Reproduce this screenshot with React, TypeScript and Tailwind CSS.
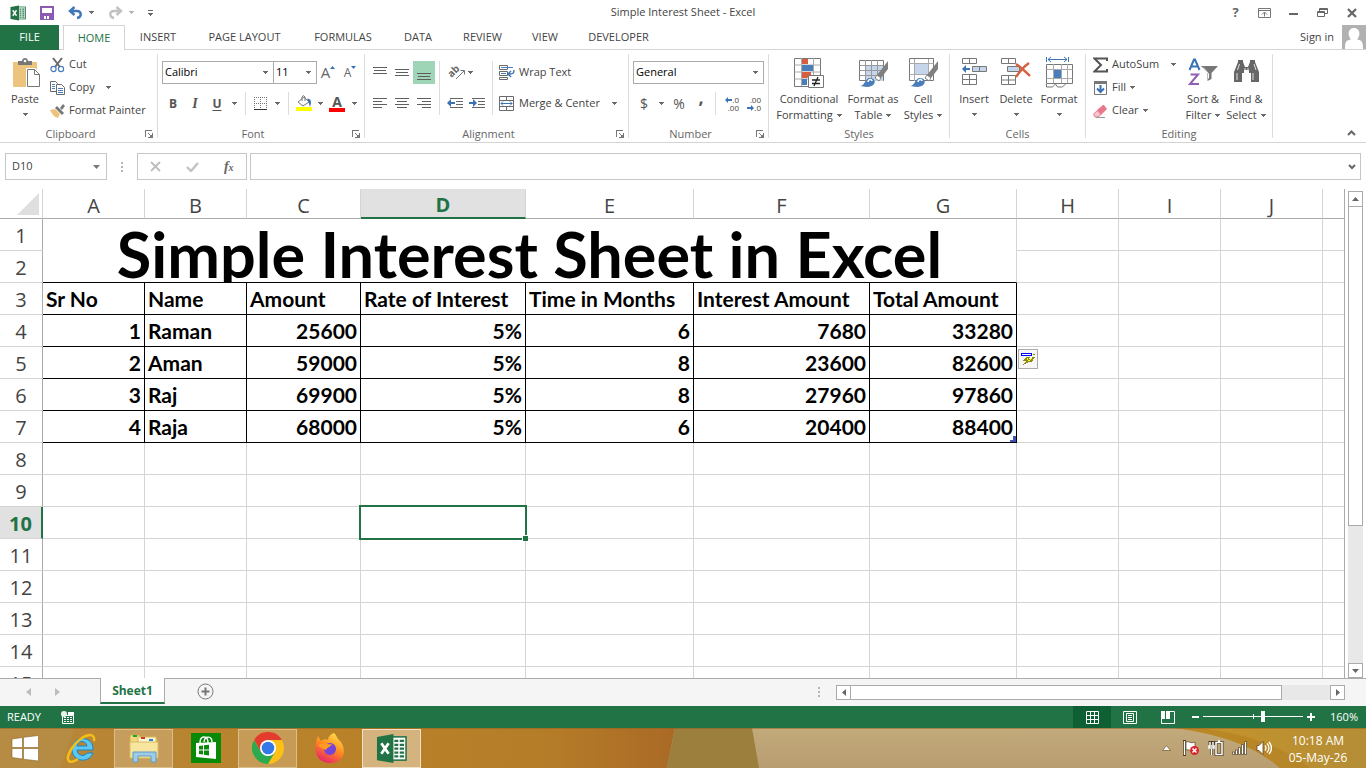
import React from "react";

type Kids = { children?: React.ReactNode };

const columns = ["A", "B", "C", "D", "E", "F", "G", "H", "I", "J", ""];
const headings = ["Sr No", "Name", "Amount", "Rate of Interest", "Time in Months", "Interest Amount", "Total Amount"];
const records = [
  ["1", "Raman", "25600", "5%", "6", "7680", "33280"],
  ["2", "Aman", "59000", "5%", "8", "23600", "82600"],
  ["3", "Raj", "69900", "5%", "8", "27960", "97860"],
  ["4", "Raja", "68000", "5%", "6", "20400", "88400"],
];
const emptyRows = [8, 9, 10, 11, 12, 13, 14, 15];

/* ---------- small drawings ---------- */

function Caret({ className = "" }: { className?: string }) {
  return (
    <svg width="5" height="3" viewBox="0 0 5 3" className={"shrink-0 " + className} shapeRendering="crispEdges" aria-hidden="true">
      <path d="M0 0h5v1H0zM1 1h3v1H1zM2 2h1v1H2z" fill="#6a6a6a" />
    </svg>
  );
}

function ExcelMark({ size }: { size: number }) {
  return (
    <svg width={size} height={size} viewBox="0 0 32 32" aria-hidden="true">
      <rect x="16" y="4" width="15" height="24" fill="#fff" stroke="#217346" strokeWidth="1.6" />
      <g fill="#217346">
        <path d="M19 7h4v2.4h-4zM24.500 7H29v2.400h-4.500zM19 11h4v2.400h-4zM24.500 11H29v2.400h-4.500zM19 15h4v2.400h-4zM24.500 15H29v2.400h-4.500zM19 19h4v2.400h-4zM24.500 19H29v2.400h-4.500zM19 23h4v2.400h-4zM24.500 23H29v2.400h-4.500z" />
      </g>
      <path d="M1 4 18 1v30L1 28z" fill="#217346" />
      <path d="m5.500 10.500 7.500 11M13 10.500l-7.500 11" stroke="#fff" strokeWidth="2.800" />
    </svg>
  );
}

function Lines({ rows }: { rows: [number, number, number][] }) {
  return (
    <svg width="14" height="14" viewBox="0 0 14 14" shapeRendering="crispEdges" aria-hidden="true">
      {rows.map(([l, y, w]) => (
        <rect key={y} x={l} y={y} width={w} height="1" fill="#5f5f5f" />
      ))}
    </svg>
  );
}

function Launcher() {
  return (
    <svg width="8" height="8" viewBox="0 0 8 8" fill="none" shapeRendering="crispEdges" aria-hidden="true">
      <path d="M0 0h7v1H1v6H0z" fill="#777" />
      <path d="M7 3h1v5H3V7h4zM3 3h1v1H3zM4 4h1v1H4zM5 5h2v2H5z" fill="#777" />
    </svg>
  );
}

function Brush() {
  return (
    <g>
      <path d="M31 5v8l-7 9-4-3z" fill="#808080" />
      <path d="M20 19l4 3-2 3-4-3z" fill="#fff" stroke="#808080" />
      <path d="M3 30c5 0 5-8 10-8 4 0 6 3 4 6-3 4-9 3-14 2z" fill="#4a7ebb" />
      <path d="M11 26c0-3 4-3 4-1" stroke="#fff" strokeWidth="1.500" fill="none" />
    </g>
  );
}

function Divider({ className = "" }: { className?: string }) {
  return <div className={"w-px shrink-0 bg-[#dcdcdc] " + className} />;
}

function Group({ label, width, launcher, children }: Kids & { label: string; width: string; launcher?: boolean }) {
  return (
    <>
      <section aria-label={label} className={"flex shrink-0 flex-col " + width}>
        <div className="flex h-[76px]">{children}</div>
        <div className="flex h-4 items-center">
          <span className="flex-1 text-center text-[#666]">{label}</span>
          {launcher && (
            <button type="button" aria-label={label + " settings"} className="flex w-4 items-center justify-center">
              <Launcher />
            </button>
          )}
        </div>
      </section>
      <Divider className="my-1" />
    </>
  );
}

function Tool({ label, width = "w-[22px]", className = "", children }: Kids & { label: string; width?: string; className?: string }) {
  return (
    <button type="button" aria-label={label} className={"flex h-[23px] shrink-0 items-center justify-center " + width + " " + className}>
      {children}
    </button>
  );
}

function BigTool({ icon, lines, width, caretBelow }: { icon: React.ReactNode; lines: string[]; width: string; caretBelow?: boolean }) {
  return (
    <button type="button" className={"flex shrink-0 flex-col items-center pt-1.5 " + width}>
      <span className="flex h-[35px] items-start justify-center">{icon}</span>
      <span className="leading-4 whitespace-nowrap">{lines[0]}</span>
      {caretBelow ? (
        <Caret className="mt-[6px]" />
      ) : (
        <span className="flex items-center gap-1 leading-4 whitespace-nowrap">
          {lines[1]}
          <Caret />
        </span>
      )}
    </button>
  );
}

function Picker({ label, value, width }: { label: string; value: string; width: string }) {
  return (
    <label className={"relative flex h-[23px] items-center border border-[#ababab] bg-white " + width}>
      <select aria-label={label} defaultValue={value} className="h-full w-full appearance-none bg-transparent pl-0.5 text-black outline-none">
        <option>{value}</option>
      </select>
      <Caret className="absolute right-[5px]" />
    </label>
  );
}

/* ---------- ribbon groups ---------- */

function Clipboard() {
  return (
    <Group label="Clipboard" width="w-[157px]" launcher>
      <BigTool
        width="w-[50px]"
        caretBelow
        lines={["Paste"]}
        icon={
          <svg width="30" height="33" viewBox="0 0 30 33" className="ml-1" aria-hidden="true">
            <path d="M1 6h24v25H1z" fill="#ecc47d" />
            <path d="M6 9V5h4c0-4 6-4 6 0h4v4z" fill="#777" />
            <circle cx="13" cy="5" r="1.300" fill="#fff" />
            <path d="M14 12h9l5 5v14H14z" fill="#fff" />
            <path d="M15.500 13.500h7l5 5v12h-12z" fill="#fff" stroke="#777" />
            <path d="M22.500 13.500v5h5" fill="none" stroke="#777" />
          </svg>
        }
      />
      <div className="flex flex-col pt-[3px]">
        <button type="button" className="flex h-[23px] items-center gap-1">
          <svg width="15" height="16" viewBox="0 0 15 16" fill="none" aria-hidden="true">
            <path d="M3 1l7 9M12 1l-7 9" stroke="#6a6a6a" strokeWidth="2" />
            <circle cx="3.500" cy="12" r="2.600" stroke="#4a7ebb" strokeWidth="1.200" />
            <circle cx="11" cy="12" r="2.600" stroke="#4a7ebb" strokeWidth="1.200" />
          </svg>
          Cut
        </button>
        <button type="button" className="flex h-[23px] items-center gap-1">
          <svg width="15" height="14" viewBox="0 0 15 14" fill="#fff" stroke="#6a6a6a" aria-hidden="true">
            <path d="M.5.5h5l2 2v8h-7z" />
            <path d="M2 3.500h3M2 5.500h3M2 7.500h3" stroke="#4a7ebb" />
            <path d="M6.500 3.500h5l3 3v7h-8z" />
            <path d="M8 7.500h5M8 9.500h5M8 11.500h5" stroke="#4a7ebb" />
          </svg>
          Copy
          <Caret className="ml-[7px]" />
        </button>
        <button type="button" className="flex h-[23px] items-center gap-1 whitespace-nowrap">
          <svg width="15" height="14" viewBox="0 0 15 14" aria-hidden="true">
            <path d="M0 6l5-1 5 5-2 4c-4-1-6-4-8-8z" fill="#ecc47d" />
            <path d="M5 4l2-2 7 7-2 2z" fill="#777" />
            <path d="M10 4l3-4 2 2-3 4z" fill="#777" />
          </svg>
          Format Painter
        </button>
      </div>
    </Group>
  );
}

function FontGroup() {
  return (
    <Group label="Font" width="w-[206px]" launcher>
      <div className="flex flex-col gap-2 pt-[11px] pl-1">
        <div className="flex">
          <Picker label="Font name" value="Calibri" width="w-28" />
          <Picker label="Font size" value="11" width="-ml-px w-11" />
          <Tool label="Increase font size">
            <span className="text-[15px] text-[#666]">A</span>
            <svg width="5" height="3" viewBox="0 0 5 3" className="mb-2.5" aria-hidden="true"><path d="M0 3 2.500 0 5 3z" fill="#3a72b4" /></svg>
          </Tool>
          <Tool label="Decrease font size">
            <span className="text-[12px] text-[#666]">A</span>
            <svg width="5" height="3" viewBox="0 0 5 3" className="mb-2.5" aria-hidden="true"><path d="M0 0h5L2.500 3z" fill="#3a72b4" /></svg>
          </Tool>
        </div>
        <div className="flex text-[12px] text-[#555]">
          <Tool label="Bold"><b>B</b></Tool>
          <Tool label="Italic"><i className="font-['Liberation_Serif',serif] text-[14px] font-bold">I</i></Tool>
          <Tool label="Underline"><b className="underline underline-offset-2">U</b></Tool>
          <Tool label="Underline styles" width="w-3"><Caret /></Tool>
          <Divider className="mx-[5px]" />
          <Tool label="Borders" width="w-5">
            <svg width="14" height="14" viewBox="0 0 14 14" fill="none" stroke="#777" aria-hidden="true">
              <path d="M0 .5h13M0 6.500h13M.5 0v12M6.500 0v12M12.500 0v12" strokeDasharray="1 1" />
              <path d="M0 12.500h13" stroke="#333" />
            </svg>
          </Tool>
          <Tool label="Border styles" width="w-3"><Caret /></Tool>
          <Divider className="mx-[5px]" />
          <Tool label="Fill colour" width="w-5">
            <svg width="17" height="17" viewBox="0 0 17 17" aria-hidden="true">
              <path d="M2 7l6-5 5 5-6 4z" fill="#fff" stroke="#777" />
              <path d="M6 6V2q1-3 3 0v4" fill="none" stroke="#777" />
              <path d="M11 4c4-1 5 3 3 8-1-3-1-5-3-8z" fill="#3a72b4" />
              <path d="M0 12h16v4H0z" fill="#ff0" />
            </svg>
          </Tool>
          <Tool label="Fill colours" width="w-3"><Caret /></Tool>
          <Tool label="Font colour" className="flex-col">
            <b className="text-[14px] leading-3">A</b>
            <span className="h-1 w-4 bg-[#f00]" />
          </Tool>
          <Tool label="Font colours" width="w-3"><Caret /></Tool>
        </div>
      </div>
    </Group>
  );
}

function Indent({ flip }: { flip?: boolean }) {
  return (
    <svg width="17" height="13" viewBox="0 0 17 13" aria-hidden="true">
      <path d="M3 1.500h13M9 4.500h7M9 7.500h7M3 10.500h13" stroke="#666" />
      <path d={flip ? "M8 6 4 2v3H0v2h4v3z" : "M0 6l4-4v3h4v2H4v3z"} fill="#3a72b4" />
    </svg>
  );
}

function Alignment() {
  return (
    <Group label="Alignment" width="w-[263px]" launcher>
      <div className="flex flex-col gap-2 pt-[11px] pl-1">
        <div className="flex">
          <Tool label="Top align"><Lines rows={[[0, 1, 14], [1, 4, 12], [0, 7, 14]]} /></Tool>
          <Tool label="Middle align"><Lines rows={[[0, 3, 14], [1, 6, 12], [0, 9, 14]]} /></Tool>
          <Tool label="Bottom align" className="bg-[#9fd5b7]"><Lines rows={[[0, 7, 14], [1, 10, 12], [0, 13, 14]]} /></Tool>
        </div>
        <div className="flex">
          <Tool label="Align left"><Lines rows={[[0, 1, 14], [0, 4, 9], [0, 7, 14], [0, 10, 9]]} /></Tool>
          <Tool label="Centre"><Lines rows={[[0, 1, 14], [2, 4, 10], [0, 7, 14], [2, 10, 10]]} /></Tool>
          <Tool label="Align right"><Lines rows={[[0, 1, 14], [5, 4, 9], [0, 7, 14], [5, 10, 9]]} /></Tool>
        </div>
      </div>
      <Divider className="mx-1 mt-[11px] mb-[11px]" />
      <div className="flex flex-col gap-2 pt-[11px]">
        <div className="flex">
          <Tool label="Orientation" className="relative">
            <span className="-rotate-45 pb-1.5 text-[10px] leading-3 font-bold text-[#666]">ab</span>
            <svg width="11" height="11" viewBox="0 0 11 11" className="absolute right-0 bottom-1" aria-hidden="true">
              <path d="M1 10 9 2M5.500 1.500h4v4" stroke="#777" fill="none" />
            </svg>
          </Tool>
          <Tool label="Orientation options" width="w-2"><Caret /></Tool>
        </div>
        <div className="flex">
          <Tool label="Decrease indent"><Indent /></Tool>
          <Tool label="Increase indent"><Indent flip /></Tool>
        </div>
      </div>
      <Divider className="mx-1 mt-[11px] mb-[11px]" />
      <div className="flex flex-col gap-2 pt-[11px] pl-0.5">
        <button type="button" className="flex h-[23px] items-center gap-1 whitespace-nowrap">
          <svg width="16" height="16" viewBox="0 0 16 16" fill="none" stroke="#6a6a6a" aria-hidden="true">
            <path d="M.5.5h8v4h-8zM.5 6.500h8v4h-8zM.5 12.500h8v2h-8z" />
            <path d="M2 2.500h12M2 8.500h5" stroke="#4a7ebb" />
            <path d="M15 5c0 4-2 4-5 4M12 6l-3 3 3 3" stroke="#3a72b4" strokeWidth="1.400" />
          </svg>
          Wrap Text
        </button>
        <button type="button" className="flex h-[23px] items-center gap-1 whitespace-nowrap">
          <svg width="16" height="16" viewBox="0 0 16 16" fill="none" stroke="#6a6a6a" aria-hidden="true">
            <path d="M.5.5h14v14H.5zM.5 4.500h14M.5 10.500h14M7.500.5v4M7.500 10.500v4" />
            <path d="M2 7.500h11M4 5.500l-2 2 2 2M11 5.500l2 2-2 2" stroke="#3a72b4" />
          </svg>
          Merge &amp; Center
          <Caret className="ml-2" />
        </button>
      </div>
    </Group>
  );
}

function DecimalIcon({ more }: { more?: boolean }) {
  const arrow = (
    <svg width="7" height="6" viewBox="0 0 7 6" aria-hidden="true">
      <path d={more ? "M0 3 3 0v2h4v2H3v2z" : "M7 3 4 0v2H0v2h4v2z"} fill="#3a72b4" />
    </svg>
  );
  return (
    <span className="flex w-4 flex-col items-end text-[8px] leading-2 text-[#444]">
      <span className="flex items-center">{more && arrow}{more ? ".0" : ".00"}</span>
      <span className="flex items-center">{!more && arrow}{more ? ".00" : ".0"}</span>
    </span>
  );
}

function NumberGroup() {
  return (
    <Group label="Number" width="w-[139px]" launcher>
      <div className="flex flex-col gap-2 pt-[11px] pl-1">
        <Picker label="Number format" value="General" width="w-[131px]" />
        <div className="flex text-[14px] text-[#555]">
          <Tool label="Currency">$</Tool>
          <Tool label="Currency options" width="w-3"><Caret /></Tool>
          <Tool label="Percent" width="w-6">%</Tool>
          <Tool label="Comma" width="w-5"><b className="-mt-3 text-[18px]">,</b></Tool>
          <Divider className="mx-1" />
          <Tool label="Increase decimal"><DecimalIcon more /></Tool>
          <Tool label="Decrease decimal"><DecimalIcon /></Tool>
        </div>
      </div>
    </Group>
  );
}

function Styles() {
  return (
    <Group label="Styles" width="w-[180px]">
      <BigTool
        width="ml-1 w-[72px]"
        lines={["Conditional", "Formatting"]}
        icon={
          <svg width="30" height="33" viewBox="0 0 30 33" aria-hidden="true">
            <path d="M.5 2.500h26v28H.5z" fill="#fff" stroke="#777" />
            <path d="M.5 9h26M.5 16h26M.5 23h26M7.500 2v28M19.500 2v28" stroke="#aaa" />
            <path d="M8 3h6v5H8zM8 16h9v4l-4 2H8z" fill="#d65f3f" />
            <path d="M8 9h11v6H8zM8 23h5v6H8z" fill="#4a7ebb" />
            <path d="M14.500 19.500h15v12h-15z" fill="#fff" stroke="#777" />
            <path d="M18 24h8M18 27.500h8M24 21l-4 9" stroke="#222" strokeWidth="1.300" />
          </svg>
        }
      />
      <BigTool
        width="w-14"
        lines={["Format as", "Table"]}
        icon={
          <svg width="32" height="33" viewBox="0 0 32 33" aria-hidden="true">
            <path d="M2.500 4.500h24v20h-24z" fill="#fff" stroke="#777" />
            <path d="M9 10h17v15H9z" fill="#c5d6ec" />
            <path d="M2.500 9.500h24M2.500 14.500h24M2.500 19.500h24M8.500 4v20M14.500 4v20M20.500 4v20" stroke="#999" fill="none" />
            <Brush />
          </svg>
        }
      />
      <BigTool
        width="w-11"
        lines={["Cell", "Styles"]}
        icon={
          <svg width="32" height="33" viewBox="0 0 32 33" aria-hidden="true">
            <path d="M2.500 2.500h24v22h-24z" fill="#fff" stroke="#777" />
            <path d="M2.500 7.500h24M2.500 18.500h24M7.500 3v22M21.500 3v22" stroke="#aaa" />
            <path d="M8 8h13v10H8z" fill="#c5d6ec" />
            <Brush />
          </svg>
        }
      />
    </Group>
  );
}

function Cells() {
  return (
    <Group label="Cells" width="w-[135px]">
      <BigTool
        width="ml-[3px] w-[42px]"
        caretBelow
        lines={["Insert"]}
        icon={
          <svg width="27" height="30" viewBox="0 0 27 30" fill="#fff" stroke="#777" aria-hidden="true">
            <path d="M1.500 2.500h14v5h-14zM8.500 2.500v5M1.500 18.500h14v10h-14zM8.500 18.500v10M1.500 23.500h14" />
            <path d="M11.500 10.500h14v5h-14zM18.500 10.500v5" fill="#c5d6ec" />
            <path d="M1 13l4-4v3h4v2H5v3z" fill="#3a72b4" stroke="none" />
          </svg>
        }
      />
      <BigTool
        width="w-[42px]"
        caretBelow
        lines={["Delete"]}
        icon={
          <svg width="30" height="30" viewBox="0 0 30 30" fill="#fff" stroke="#777" aria-hidden="true">
            <path d="M.5 2.500h14v5H.5zM7.500 2.500v5M.5 19.500h14v9H.5zM7.500 19.500v9M.5 24h14" />
            <path d="M6.500 10.500h12v5h-12z" fill="#c5d6ec" />
            <path d="M15 8q6 4 14 12M28 7q-7 5-13 14" stroke="#d65f3f" strokeWidth="2.400" fill="none" />
          </svg>
        }
      />
      <BigTool
        width="w-11"
        caretBelow
        lines={["Format"]}
        icon={
          <svg width="29" height="33" viewBox="0 0 29 33" fill="none" stroke="#777" aria-hidden="true">
            <path d="M1.500 1v5M23.500 1v5M3 3.500h19M6 1 3 3.500 6 6M19 1l3 2.500L19 6" stroke="#3a72b4" />
            <path d="M1.500 8.500h26v19h-26z" fill="#fff" />
            <path d="M1.500 13.500h26M1.500 22.500h26M8.500 8v19M16.500 8v19M22.500 8v19" stroke="#aaa" />
            <path d="M9 14h7v8H9z" fill="#4a7ebb" stroke="none" />
            <path d="M1.500 28v3h6l3-3 2 3h5l3-3" />
          </svg>
        }
      />
    </Group>
  );
}

function Editing() {
  return (
    <Group label="Editing" width="w-[186px]">
      <div className="flex w-[95px] flex-col pt-[3px] pl-[7px]">
        <button type="button" className="flex h-[23px] items-center gap-1">
          <svg width="15" height="16" viewBox="0 0 15 16" fill="none" aria-hidden="true">
            <path d="M14 4V1.500H1.500L8 8l-6.500 6.500H14V12" stroke="#555" strokeWidth="2" />
          </svg>
          AutoSum
          <Caret className="ml-2" />
        </button>
        <button type="button" className="flex h-[23px] items-center gap-1">
          <svg width="15" height="16" viewBox="0 0 15 16" aria-hidden="true">
            <path d="M1.500 1.500h12v13h-12z" fill="#fff" stroke="#777" />
            <path d="M1 1h13v3H1z" fill="#777" />
            <path d="M7.500 5v7M4 8.500l3.500 3.500L11 8.500" stroke="#3a72b4" strokeWidth="2" fill="none" />
          </svg>
          Fill
          <Caret />
        </button>
        <button type="button" className="flex h-[23px] items-center gap-1">
          <svg width="15" height="14" viewBox="0 0 15 14" aria-hidden="true">
            <path d="M4 6l6-5h1l3 4-6 6z" fill="#e8798d" />
            <path d="M4.500 6.500 8 10.500l-3 2.500H2L.5 10z" fill="#f7c4cd" stroke="#e8798d" />
            <path d="M3 13.500h9" stroke="#999" />
          </svg>
          Clear
          <Caret />
        </button>
      </div>
      <BigTool
        width="w-11"
        lines={["Sort &", "Filter"]}
        icon={
          <svg width="30" height="32" viewBox="0 0 30 32" aria-hidden="true">
            <path d="M1.500 14 6 3.500h1L11.500 14M3.500 10.500h6" stroke="#3a72b4" strokeWidth="2" fill="none" />
            <path d="M2.500 18.500H10l-8 9.500h9" stroke="#9160b5" strokeWidth="2" fill="none" />
            <path d="M13 10h17l-6.500 7v6l-4 2v-8z" fill="#777" />
            <path d="M15 11.500l5.500 6v5" stroke="#fff" fill="none" />
          </svg>
        }
      />
      <BigTool
        width="w-[42px]"
        lines={["Find &", "Select"]}
        icon={
          <svg width="27" height="32" viewBox="0 0 27 32" aria-hidden="true">
            <path d="M5 6V4h5v2l2 5h3l2-5V4h5v2l4 10v10h-8v-9h-2v-3h-5v3H9v9H1V16z" fill="#666" />
            <path d="M4 17v7M6.500 8l-2 6M12 12v3M21 8l2 6M20 17v7M15 12v3" stroke="#fff" strokeWidth="0.800" />
          </svg>
        }
      />
    </Group>
  );
}

/* ---------- window chrome ---------- */

const windowButton = "flex h-full w-[29px] items-center justify-center";

function TitleBar() {
  return (
    <header className="grid h-[25px] shrink-0 grid-cols-[1fr_auto_1fr] items-center">
      <div className="flex items-center pl-2.5">
        <ExcelMark size={16} />
        <button type="button" aria-label="Save" className="ml-3.5">
          <svg width="14" height="14" viewBox="0 0 14 14" aria-hidden="true">
            <path d="M1 1h12v12H1z" fill="#fff" stroke="#8a5bb0" strokeWidth="2" />
            <path d="M1 7h12v6H1z" fill="#8a5bb0" />
            <path d="M4 10h5v3H4z" fill="#fff" />
            <path d="M6 10h1v3H6z" fill="#8a5bb0" />
          </svg>
        </button>
        <button type="button" aria-label="Undo" className="ml-3.5 flex items-center gap-1.5">
          <svg width="15" height="14" viewBox="0 0 15 14" fill="none" stroke="#3f76b8" strokeWidth="2.400" aria-hidden="true">
            <path d="M6.500 1 2 5l4.500 4M2.500 5H9c5 0 5 6 0 7" />
          </svg>
          <Caret />
        </button>
        <button type="button" aria-label="Redo" className="ml-3.5 flex items-center gap-1.5 opacity-70">
          <svg width="15" height="14" viewBox="0 0 15 14" fill="none" stroke="#a9a9a9" strokeWidth="2.400" aria-hidden="true">
            <path d="M8.500 1 13 5 8.500 9M12.500 5H6c-5 0-5 6 0 7" />
          </svg>
          <Caret className="opacity-70" />
        </button>
        <button type="button" aria-label="Customize toolbar" className="ml-3.5 flex flex-col items-center gap-0.5">
          <span className="h-px w-[5px] bg-[#666]" />
          <Caret />
        </button>
      </div>
      <h1 className="text-[#444]">Simple Interest Sheet - Excel</h1>
      <div className="flex h-full items-center justify-end text-[#666]">
        <button type="button" aria-label="Help" className={windowButton + " text-[13px] font-bold"}>?</button>
        <button type="button" aria-label="Ribbon display options" className={windowButton}>
          <svg width="13" height="10" viewBox="0 0 13 10" fill="none" stroke="#777" aria-hidden="true">
            <path d="M.5.5h12v9H.5zM.5 2.500h12M6.500 8.500v-4M4 6.500l2.500-2.500L9 6.500" />
          </svg>
        </button>
        <button type="button" aria-label="Minimize" className={windowButton}>
          <svg width="13" height="10" viewBox="0 0 13 10" aria-hidden="true"><path d="M2 5h9v2H2z" fill="#666" /></svg>
        </button>
        <button type="button" aria-label="Restore" className={windowButton}>
          <svg width="11" height="10" viewBox="0 0 11 10" fill="none" stroke="#666" aria-hidden="true">
            <path d="M2.500 3V.5h8v5H8M.5 3.500h7v5h-7zM.5 4.500h7M2.500 1.500h8" />
          </svg>
        </button>
        <button type="button" aria-label="Close" className={windowButton}>
          <svg width="10" height="10" viewBox="0 0 10 10" aria-hidden="true"><path d="M1 1l8 8M9 1 1 9" stroke="#666" strokeWidth="2.200" /></svg>
        </button>
      </div>
    </header>
  );
}

const tabs: [string, string][] = [
  ["INSERT", "w-[66px]"],
  ["PAGE LAYOUT", "w-[107px]"],
  ["FORMULAS", "w-[90px]"],
  ["DATA", "w-[60px]"],
  ["REVIEW", "w-[69px]"],
  ["VIEW", "w-14"],
  ["DEVELOPER", "w-[91px]"],
];

function RibbonTabs() {
  return (
    <nav className="flex h-[25px] shrink-0 items-stretch text-[#444]">
      <button type="button" className="w-[59px] bg-[#217346] text-white">FILE</button>
      <div className="w-1 border-b border-[#d4d4d4]" />
      <button type="button" className="w-[62px] border border-b-0 border-[#d4d4d4] text-[#217346]">HOME</button>
      <div className="flex flex-1 items-stretch border-b border-[#d4d4d4]">
        {tabs.map(([name, width]) => (
          <button key={name} type="button" className={width}>{name}</button>
        ))}
        <button type="button" className="ml-auto flex items-center gap-2">
          Sign in
          <svg width="24" height="24" viewBox="0 0 24 24" aria-hidden="true">
            <path d="M0 0h24v24H0z" fill="#b1b1b1" />
            <path d="M3 24c0-7 1-9 6-9.500C5 10 6 3 12 3s7 7 3 11.500c5 .5 6 2.500 6 9.500z" fill="#fff" />
          </svg>
        </button>
      </div>
    </nav>
  );
}

function FormulaBar() {
  return (
    <div className="flex h-[46px] shrink-0 items-start pt-2.5 pr-[5px] pl-[5px]">
      <div className="flex h-[27px] w-[102px] items-center border border-[#c6c6c6] bg-white">
        <input aria-label="Name box" defaultValue="D10" className="w-0 flex-1 pl-1.5 text-[#444] outline-none" />
        <button type="button" aria-label="Name list" className="pr-1.5">
          <svg width="7" height="4" viewBox="0 0 7 4" aria-hidden="true"><path d="M0 0h7L3.500 4z" fill="#777" /></svg>
        </button>
      </div>
      <div className="flex h-[27px] w-[30px] items-center justify-center">
        <svg width="2" height="10" viewBox="0 0 2 10" aria-hidden="true"><path d="M0 0h2v2H0zM0 4h2v2H0zM0 8h2v2H0z" fill="#b5b5b5" /></svg>
      </div>
      <div className="flex h-[27px] w-[110px] items-center justify-around border border-[#c6c6c6]">
        <button type="button" aria-label="Cancel">
          <svg width="11" height="11" viewBox="0 0 11 11" aria-hidden="true"><path d="M1 1l9 9M10 1l-9 9" stroke="#bdbdbd" strokeWidth="1.800" /></svg>
        </button>
        <button type="button" aria-label="Enter">
          <svg width="13" height="10" viewBox="0 0 13 10" aria-hidden="true"><path d="M1 5l4 4 7-8" stroke="#c3c3c3" strokeWidth="2.400" fill="none" /></svg>
        </button>
        <button type="button" aria-label="Insert function" className="font-['Liberation_Serif',serif] text-[14px] font-bold text-[#666] italic">
          f<span className="text-[10px]">x</span>
        </button>
      </div>
      <div className="ml-[3px] flex h-[27px] flex-1 items-center border border-[#c6c6c6] bg-white">
        <input aria-label="Formula bar" className="w-0 flex-1 px-2 outline-none" />
        <button type="button" aria-label="Expand formula bar" className="pr-1">
          <svg width="8" height="6" viewBox="0 0 8 6" aria-hidden="true"><path d="M1 1l3 3 3-3" stroke="#666" strokeWidth="2" fill="none" /></svg>
        </button>
      </div>
    </div>
  );
}

/* ---------- sheet ---------- */

const rowHeader = "border-r border-b border-r-[#ababab] border-b-[#d4d4d4] p-0 pt-0.5 font-normal text-[#444]";
const gridCell = "border-r border-b border-[#d4d4d4] p-0 last:border-r-0";
const dataCell = "border-r border-b border-black px-[3px] py-0 leading-6 whitespace-nowrap";

function Sheet() {
  return (
    <div className="min-h-0 flex-1 overflow-hidden border-r border-[#ababab]">
      <table className="w-full table-fixed border-separate border-spacing-0">
        <colgroup>
          <col className="w-[43px]" />
          <col className="w-[102px]" />
          <col className="w-[102px]" />
          <col className="w-[114px]" />
          <col className="w-[165px]" />
          <col className="w-[168px]" />
          <col className="w-[176px]" />
          <col className="w-[147px]" />
          <col className="w-[102px]" />
          <col className="w-[102px]" />
          <col className="w-[102px]" />
          <col />
        </colgroup>
        <thead>
          <tr className="h-[30px] text-[20px] leading-6">
            <th aria-label="Select all" className="border-r border-b border-r-[#d4d4d4] border-b-[#ababab] p-0">
              <svg width="22" height="22" viewBox="0 0 22 22" className="ml-[17px]" aria-hidden="true"><path d="M22 0v22H0z" fill="#dfdfdf" /></svg>
            </th>
            {columns.map((c) =>
              c === "D" ? (
                <th key={c} className="border-r border-b-2 border-r-[#d4d4d4] border-b-[#217346] bg-[#e1e1e1] p-0 pt-1 font-bold text-[#217346]">{c}</th>
              ) : (
                <th key={c} className="border-r border-b border-r-[#d4d4d4] border-b-[#ababab] p-0 pt-1 font-normal text-[#444] last:border-r-0">{c}</th>
              ),
            )}
          </tr>
        </thead>
        <tbody className="text-[20px] leading-6">
          <tr className="h-8">
            <th className={rowHeader}>1</th>
            <td colSpan={7} rowSpan={2} className="border-r border-b border-r-[#d4d4d4] border-b-black p-0 text-center font-['Lato',sans-serif] text-[63px] font-bold text-black">
              <div className="h-[63px] overflow-hidden leading-[70px] whitespace-nowrap">Simple Interest Sheet in Excel</div>
            </td>
            <td className={gridCell} /><td className={gridCell} /><td className={gridCell} /><td className={gridCell} />
          </tr>
          <tr className="h-8">
            <th className={rowHeader}>2</th>
            <td className={gridCell} /><td className={gridCell} /><td className={gridCell} /><td className={gridCell} />
          </tr>
          <tr className="h-8">
            <th className={rowHeader}>3</th>
            {headings.map((h) => (
              <th key={h} scope="col" className={dataCell + " text-left font-['Lato',sans-serif] text-[21px] font-bold text-black"}>{h}</th>
            ))}
            <td className={gridCell} /><td className={gridCell} /><td className={gridCell} /><td className={gridCell} />
          </tr>
          {records.map((r, i) => (
            <tr key={r[0]} className="h-8">
              <th className={rowHeader}>{i + 4}</th>
              {r.map((v, j) => (
                <td
                  key={j}
                  className={dataCell + " relative font-['Lato',sans-serif] text-[21px] font-bold text-black " + (j === 1 ? "text-left" : "text-right")}
                >
                  {v}
                  {i === 3 && j === 6 && (
                    <svg width="6" height="6" viewBox="0 0 6 6" className="absolute right-0 bottom-0" aria-hidden="true">
                      <path d="M0 6V4h3V0h3v6z" fill="#3f51b5" />
                    </svg>
                  )}
                </td>
              ))}
              <td className={gridCell + " relative"}>
                {i === 1 && (
                  <button type="button" aria-label="Quick analysis" className="absolute top-0.5 left-px flex h-5 w-5 items-center justify-center border border-[#ababab] bg-[#f7f7f7]">
                    <svg width="16" height="14" viewBox="0 0 16 14" shapeRendering="crispEdges" aria-hidden="true">
                      <path d="M1 1h11v3H1z" fill="#00f" />
                      <path d="M2 2h9v1H2z" fill="#fff" />
                      <path d="M13 2h2v1h-2z" fill="#880" />
                      <path d="M6 5h4L8 7h2l3-2h2l-3 3h2l-3 2H9l-6 3 3-4H3z" fill="#8a8a14" />
                      <path d="M7 6h1L6 8h2l-2 2 5-2h-1l2-2-3 2H8z" fill="#ff0" />
                    </svg>
                  </button>
                )}
              </td>
              <td className={gridCell} /><td className={gridCell} /><td className={gridCell} />
            </tr>
          ))}
          {emptyRows.map((n) => (
            <tr key={n} className="h-8">
              {n === 10 ? (
                <th className="border-r-2 border-b border-r-[#217346] border-b-[#d4d4d4] bg-[#e1e1e1] p-0 pt-0.5 font-bold text-[#217346]">{n}</th>
              ) : (
                <th className={rowHeader}>{n}</th>
              )}
              {columns.map((c) => (
                <td key={c} className={gridCell + " relative"}>
                  {n === 10 && c === "D" && (
                    <div className="absolute -inset-0.5 z-10 border-2 border-[#217346]">
                      <span className="absolute -right-[3px] -bottom-[3px] h-1.5 w-1.5 border-t border-l border-white bg-[#217346]" />
                    </div>
                  )}
                </td>
              ))}
            </tr>
          ))}
        </tbody>
      </table>
    </div>
  );
}

function VerticalScroll() {
  return (
    <div className="flex w-[21px] shrink-0 flex-col items-center pt-0.5">
      <button type="button" aria-label="Scroll up" className="flex h-4 w-[15px] items-center justify-center border border-[#ababab] bg-white">
        <svg width="7" height="4" viewBox="0 0 7 4" aria-hidden="true"><path d="M0 4h7L3.500 0z" fill="#666" /></svg>
      </button>
      <div className="flex w-[15px] flex-1 flex-col bg-[#e8e8e8]">
        <div className="h-[70%] border border-t-0 border-[#ababab] bg-white" />
      </div>
      <button type="button" aria-label="Scroll down" className="flex h-[15px] w-[15px] items-center justify-center border border-[#ababab] bg-white">
        <svg width="7" height="4" viewBox="0 0 7 4" aria-hidden="true"><path d="M0 0h7L3.500 4z" fill="#666" /></svg>
      </button>
    </div>
  );
}

function SheetTabs() {
  return (
    <div className="flex h-7 shrink-0 items-start border-t border-[#ababab] bg-[#f5f5f5]">
      <div className="flex h-[26px] w-[100px] items-center gap-6 pl-[26px]">
        <button type="button" aria-label="Previous sheet">
          <svg width="5" height="8" viewBox="0 0 5 8" aria-hidden="true"><path d="M5 0v8L0 4z" fill="#bcbcbc" /></svg>
        </button>
        <button type="button" aria-label="Next sheet">
          <svg width="5" height="8" viewBox="0 0 5 8" aria-hidden="true"><path d="M0 0v8l5-4z" fill="#bcbcbc" /></svg>
        </button>
      </div>
      <button type="button" className="-mt-px h-[26px] w-[65px] border-r border-b-2 border-l border-r-[#ababab] border-b-[#217346] border-l-[#ababab] bg-white pt-0.5 text-[12px] font-bold text-[#217346]">
        Sheet1
      </button>
      <button type="button" aria-label="New sheet" className="mt-1 ml-8">
        <svg width="17" height="17" viewBox="0 0 17 17" fill="none" stroke="#777" aria-hidden="true">
          <circle cx="8.500" cy="8.500" r="7.500" />
          <path d="M4.500 8.500h8M8.500 4.500v8" strokeWidth="2" />
        </svg>
      </button>
      <div className="flex flex-1 items-start justify-end pt-1.5">
        <svg width="2" height="14" viewBox="0 0 2 14" className="mr-4" aria-hidden="true"><path d="M0 2h2v2H0zM0 6h2v2H0zM0 10h2v2H0z" fill="#b5b5b5" /></svg>
      </div>
      <div className="mt-1.5 mr-[21px] flex h-[15px] w-[509px] bg-[#e8e8e8]">
        <button type="button" aria-label="Scroll left" className="flex w-[15px] items-center justify-center border border-[#ababab] bg-white">
          <svg width="4" height="7" viewBox="0 0 4 7" aria-hidden="true"><path d="M4 0v7L0 3.500z" fill="#666" /></svg>
        </button>
        <div className="w-[431px] border border-l-0 border-[#ababab] bg-white" />
        <button type="button" aria-label="Scroll right" className="ml-auto flex w-[15px] items-center justify-center border border-[#ababab] bg-white">
          <svg width="4" height="7" viewBox="0 0 4 7" aria-hidden="true"><path d="M0 0v7l4-3.500z" fill="#666" /></svg>
        </button>
      </div>
    </div>
  );
}

function StatusBar() {
  return (
    <footer className="flex h-[22px] shrink-0 items-center bg-[#217346] text-white">
      <span className="ml-[7px]">READY</span>
      <svg width="14" height="13" viewBox="0 0 14 13" className="ml-5" aria-hidden="true">
        <path d="M1.500 4.500h11v8h-11z" fill="none" stroke="#fff" />
        <path d="M7 1h6v3H7z" fill="#fff" />
        <path d="M3 6.500h8M3 8.500h8M3 10.500h8" stroke="#fff" strokeDasharray="2 1" />
        <circle cx="3" cy="3" r="3" fill="#e8f0ea" />
      </svg>
      <div className="ml-auto flex h-full items-center">
        <button type="button" aria-label="Normal view" className="flex h-full w-[38px] items-center justify-center bg-[#0e5f33]">
          <svg width="13" height="13" viewBox="0 0 13 13" fill="none" stroke="#fff" aria-hidden="true"><path d="M.5.5h12v12H.5zM.5 4.500h12M.5 8.500h12M4.500.5v12M8.500.5v12" /></svg>
        </button>
        <button type="button" aria-label="Page layout view" className="flex h-full w-[38px] items-center justify-center">
          <svg width="14" height="13" viewBox="0 0 14 13" fill="none" stroke="#fff" aria-hidden="true"><path d="M.5.5h13v12H.5zM3.500 2.500h7v8h-7zM5 4.500h4M5 6.500h4M5 8.500h4" /></svg>
        </button>
        <button type="button" aria-label="Page break view" className="flex h-full w-[38px] items-center justify-center">
          <svg width="14" height="13" viewBox="0 0 14 13" aria-hidden="true"><path d="M.5.5h13v12H.5z" fill="none" stroke="#fff" /><path d="M0 0h4v8H0zM5 0h4v8H5z" fill="#fff" /><path d="M4 0h1v8H4zM9 1h1v8H9z" fill="#217346" /></svg>
        </button>
        <button type="button" aria-label="Zoom out" className="ml-1 flex w-2 justify-center">
          <svg width="7" height="8" viewBox="0 0 7 8" aria-hidden="true"><path d="M0 3h7v2H0z" fill="#fff" /></svg>
        </button>
        <label className="relative mx-1 flex h-3 w-[100px] items-center">
          <input type="range" min="0" max="100" defaultValue="60" aria-label="Zoom" className="absolute inset-0 w-full opacity-0" />
          <svg width="100" height="12" viewBox="0 0 100 12" fill="#fff" aria-hidden="true"><path d="M0 5h100v1H0zM50 3h1v5h-1zM58 0h4v11h-4z" /></svg>
        </label>
        <button type="button" aria-label="Zoom in" className="flex w-2 justify-center">
          <svg width="8" height="8" viewBox="0 0 8 8" aria-hidden="true"><path d="M0 3h8v2H0zM3 0h2v8H3z" fill="#fff" /></svg>
        </button>
        <span className="w-[51px] pr-2 text-right">160%</span>
      </div>
    </footer>
  );
}

/* ---------- taskbar ---------- */

function TaskButton({ label, active, children }: Kids & { label: string; active?: "open" | "front" }) {
  const look =
    active === "front"
      ? "border border-[#f0e2c8] bg-white/40"
      : active === "open"
        ? "border border-[#d9bf8e] bg-white/20"
        : "";
  return (
    <button type="button" aria-label={label} className={"flex h-[39px] w-[59px] items-center justify-center " + look}>
      {children}
    </button>
  );
}

function Taskbar() {
  return (
    <div className="relative flex h-10 shrink-0 items-center overflow-hidden text-white">
      <svg viewBox="0 0 1366 40" preserveAspectRatio="none" className="absolute inset-0 h-full w-full" aria-hidden="true">
        <defs>
          <linearGradient id="amber"><stop offset="0" stopColor="#b7873a" /><stop offset="0.500" stopColor="#b98229" /><stop offset="0.800" stopColor="#b57d28" /><stop offset="1" stopColor="#aa6a26" /></linearGradient>
          <linearGradient id="gold"><stop offset="0" stopColor="#c99528" /><stop offset="1" stopColor="#b48d37" /></linearGradient>
          <linearGradient id="sand" x1="0" y1="0" x2="0" y2="1"><stop offset="0" stopColor="#c2aa7b" /><stop offset="1" stopColor="#b89d70" /></linearGradient>
        </defs>
        <path d="M0 0h1366v40H0z" fill="url(#sand)" />
        <path d="M0 0h675l-8 40H0z" fill="url(#amber)" />
        <path d="M0 0h75L60 40H0z" fill="#b58d48" opacity="0.700" />
        <path d="M675 0h77l7 40h-92z" fill="#9c7f3d" />
        <path d="M1175 0h191v40h-86c-25-22-60-34-105-40z" fill="url(#gold)" />
        <path d="M1175 0h25c50 6 85 20 110 40h-30c-25-22-60-34-105-40z" fill="#b58223" opacity="0.700" />
        <path d="M0 0h1366v1H0z" fill="#8a5f1e" opacity="0.500" />
      </svg>
      <div className="relative flex items-center gap-[3px]">
        <button type="button" aria-label="Start" className="flex w-[49px] items-center justify-center">
          <svg width="28" height="27" viewBox="0 0 28 27" fill="#fff" stroke="#8a6527" strokeWidth="0.600" aria-hidden="true">
            <path d="M1 4l10.500-1.500V12.500H1zM12.500 2.300 27.500.5v12h-15zM1 13.500h10.500V24L1 22.500zM12.500 13.500h15v12.500l-15-1.800z" />
          </svg>
        </button>
        <TaskButton label="Internet Explorer">
          <svg width="32" height="32" viewBox="0 0 32 32" fill="none" aria-hidden="true">
            <path d="M27 18H11c0 6 8 7 10 3h6c-4 11-21 9-21-4 0-14 22-14 21 1zM11 14h10c-1-6-9-6-10 0z" fill="#5cc8f3" stroke="#1c86c4" fillRule="evenodd" />
            <path d="M28 9c1-8-6-7-12-3C7 12-1 25 3 29c2 2 6 0 9-2" stroke="#f3be19" strokeWidth="2.500" />
          </svg>
        </TaskButton>
        <TaskButton label="File Explorer" active="open">
          <svg width="32" height="32" viewBox="0 0 32 32" aria-hidden="true">
            <path d="M2 3h9l2 3h16v20H2z" fill="#f2d77c" stroke="#cfab4a" />
            <path d="M10 5h18v8H10z" fill="#fdf5cf" stroke="#d7b95c" />
            <path d="M5 3h4v2H5z" fill="#1aa53b" /><path d="M13 5h4v2h-4z" fill="#d23b28" /><path d="M21 7h4v2h-4z" fill="#2b7fd0" />
            <path d="M2 10h28v16H2z" fill="#f7e5a0" stroke="#d8bb64" />
            <path d="M5 30V20h23v10h-5v-6H10v6z" fill="#9fcbe5" stroke="#5d9ec7" />
          </svg>
        </TaskButton>
        <TaskButton label="Store">
          <svg width="30" height="30" viewBox="0 0 30 30" aria-hidden="true">
            <path d="M0 0h30v30H0z" fill="#088a08" />
            <path d="M5 10l20-1v17L5 24z" fill="#fff" />
            <path d="M9 10c0-8 8-8 8 0M13 9c1-7 8-6 8 0" stroke="#fff" strokeWidth="1.400" fill="none" />
            <path d="M8 13l4-.5v4H8zM13 12.300l5-.6v4.800h-5zM8 17.500h4v4L8 21zM13 17.500h5v5l-5-.7z" fill="#088a08" />
          </svg>
        </TaskButton>
        <TaskButton label="Chrome" active="open">
          <svg width="32" height="32" viewBox="0 0 32 32" aria-hidden="true">
            <circle cx="16" cy="16" r="16" fill="#fbc116" />
            <path d="M2.100 8A16 16 0 0 1 29.900 8H16L9 20z" fill="#e33b2e" />
            <path d="M2.100 8A16 16 0 0 0 16 32l7-12-7 4-7-4z" fill="#2da94f" />
            <circle cx="16" cy="16" r="8" fill="#fff" />
            <circle cx="16" cy="16" r="6.300" fill="#3478e8" />
          </svg>
        </TaskButton>
        <TaskButton label="Firefox">
          <svg width="32" height="32" viewBox="0 0 32 32" aria-hidden="true">
            <defs><linearGradient id="fox" x1="0.800" y1="0" x2="0.300" y2="1"><stop offset="0" stopColor="#ffe14a" /><stop offset="0.500" stopColor="#ff8a1f" /><stop offset="1" stopColor="#e81f6b" /></linearGradient></defs>
            <path d="M20 1c3 3 3 5 5 7 8 7 7 23-9 23C2 31-2 17 4 4l3 5c3-2 5-2 7-1 0-3 3-6 6-7z" fill="url(#fox)" />
            <circle cx="16" cy="17" r="6" fill="#7444d8" />
            <path d="M4 13c6-3 10 0 14-1-1 3-5 3-6 6-3-2-5-1-8-5z" fill="#ff9b22" />
          </svg>
        </TaskButton>
        <TaskButton label="Excel" active="front"><ExcelMark size={31} /></TaskButton>
      </div>
      <div className="relative ml-auto flex items-center gap-2">
        <svg width="9" height="6" viewBox="0 0 9 6" className="mr-1" aria-hidden="true"><path d="M.5 5.500 4.500.5l4 5z" fill="#fff" stroke="#7a6138" strokeWidth="0.800" /></svg>
        <svg width="17" height="16" viewBox="0 0 17 16" aria-hidden="true">
          <path d="M1.500 0v16" stroke="#4d3d22" strokeWidth="3" />
          <path d="M1.500 1v14" stroke="#fff" strokeWidth="1.400" />
          <path d="M3 2c4-1 4 2 9 0v8c-5 2-5-1-9 0z" fill="#fff" stroke="#4d3d22" strokeWidth="0.700" />
          <circle cx="11.500" cy="10.500" r="4.500" fill="#d9262a" />
          <path d="M9.500 8.500l4 4M13.500 8.500l-4 4" stroke="#fff" strokeWidth="1.500" />
        </svg>
        <svg width="16" height="16" viewBox="0 0 16 16" fill="none" stroke="#fff" strokeWidth="1.500" aria-hidden="true">
          <path d="M8 2.500h6v12H8zM2 1v4M5 1v4M1 7h5M3.500 8v7" stroke="#4d3d22" strokeWidth="3" />
          <path d="M8 2.500h6v12H8zM10 1h2M2 2v3M5 2v3M1 6h5v2H1zM3.500 9v6" />
        </svg>
        <svg width="16" height="14" viewBox="0 0 16 14" fill="#fff" stroke="#4d3d22" strokeWidth="0.700" aria-hidden="true">
          <path d="M.5 11h2v2.500h-2zM3.500 9h2v4.500h-2zM6.500 6.500h2v7h-2zM9.500 3.500h2v10h-2zM12.500.5h2v13h-2z" />
        </svg>
        <svg width="16" height="14" viewBox="0 0 16 14" fill="none" stroke="#fff" strokeWidth="1.300" aria-hidden="true">
          <path d="M1 4.500h2l4-4v13l-4-4H1z" fill="#fff" stroke="#4d3d22" strokeWidth="0.700" /><path d="M9 4.500q2 2.500 0 5M11 2.500q4 4.500 0 9M13 1q5 6 0 12" />
        </svg>
        <time className="ml-1.5 flex w-20 flex-col pt-0.5 pr-4 text-center text-[12px] leading-[17px]">
          <span>10:18 AM</span>
          <span>05-May-26</span>
        </time>
      </div>
    </div>
  );
}

export default function App() {
  return (
    <div className="flex h-screen flex-col overflow-hidden bg-white font-['Open_Sans','Noto_Sans',sans-serif] text-[11px] text-[#444]">
      <TitleBar />
      <RibbonTabs />
      <div className="flex h-[93px] shrink-0 overflow-hidden border-b border-[#d4d4d4]">
        <Clipboard />
        <FontGroup />
        <Alignment />
        <NumberGroup />
        <Styles />
        <Cells />
        <Editing />
        <button type="button" aria-label="Collapse ribbon" className="mt-auto mr-2.5 mb-1.5 ml-auto">
          <svg width="9" height="6" viewBox="0 0 9 6" fill="none" aria-hidden="true"><path d="M1 5l3.500-3.500L8 5" stroke="#666" strokeWidth="2" /></svg>
        </button>
      </div>
      <FormulaBar />
      <main className="flex min-h-0 flex-1">
        <Sheet />
        <VerticalScroll />
      </main>
      <SheetTabs />
      <StatusBar />
      <Taskbar />
    </div>
  );
}
